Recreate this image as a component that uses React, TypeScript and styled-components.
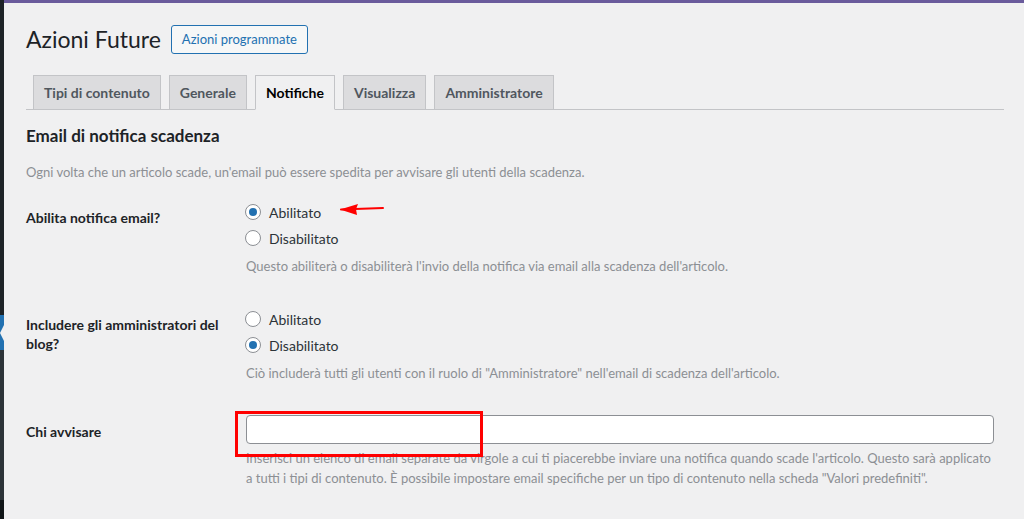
import React from "react";
import styled, { createGlobalStyle } from "styled-components";

const GlobalStyle = createGlobalStyle`
  html, body {
    margin: 0;
    padding: 0;
    background: #f0f0f1;
  }
  body {
    font-family: Lato, "Noto Sans", "Liberation Sans", sans-serif;
    color: #1d2327;
    overflow: hidden;
  }
  * {
    box-sizing: border-box;
  }
`;

const Page = styled.div`
  position: relative;
  display: flex;
  width: 1024px;
  height: 519px;
  overflow: hidden;
`;

const SideStrip = styled.div`
  width: 4px;
  flex: none;
  display: flex;
  flex-direction: column;
  background: #1d2327;
`;

const StripPart = styled.div<{ $h: number; $bg: string }>`
  height: ${(p) => p.$h}px;
  flex: none;
  background: ${(p) => p.$bg};
  position: relative;
`;

const Notch = styled.div`
  position: absolute;
  right: 0;
  top: 10px;
  width: 0;
  height: 0;
  border-top: 8px solid transparent;
  border-bottom: 8px solid transparent;
  border-right: 4px solid #f0f0f1;
`;

const Main = styled.div`
  flex: 1;
  display: flex;
  flex-direction: column;
`;

const TopBar = styled.div`
  height: 3px;
  background: #6a5b9c;
`;

const Wrap = styled.div`
  padding: 21px 20px 0 22px;
`;

const Header = styled.div`
  display: flex;
  align-items: center;
  gap: 10px;
`;

const Title = styled.h1`
  margin: 0;
  font-size: 23px;
  font-weight: 400;
  line-height: 30px;
  color: #1d2327;
`;

const ActionButton = styled.button`
  height: 29px;
  padding: 0 10px;
  border: 1px solid #2271b1;
  border-radius: 3px;
  background: #f6f7f7;
  color: #2271b1;
  font-family: inherit;
  font-size: 13px;
  line-height: 27px;
`;

const TabBar = styled.div`
  margin-top: 21px;
  display: flex;
  gap: 8px;
  padding-left: 7px;
  border-bottom: 1px solid #c3c4c7;
`;

const Tab = styled.div<{ $active?: boolean }>`
  height: 35px;
  margin-bottom: -1px;
  padding: 0 10px;
  border: 1px solid #c3c4c7;
  border-bottom-color: ${(p) => (p.$active ? "#f0f0f1" : "#c3c4c7")};
  background: ${(p) => (p.$active ? "#f0f0f1" : "#dcdcde")};
  color: ${(p) => (p.$active ? "#000" : "#50575e")};
  font-size: 14px;
  font-weight: 700;
  line-height: 34px;
  white-space: nowrap;
`;

const SectionTitle = styled.h2`
  margin: 15px 0 0;
  font-size: 17px;
  font-weight: 700;
  line-height: 22px;
  color: #1d2327;
`;

const Description = styled.p<{ $mt?: number }>`
  margin: ${(p) => p.$mt ?? 0}px 0 0;
  font-size: 13px;
  line-height: ${(p) => (p.$mt === 4 ? 20 : 18)}px;
  color: #8c8f94;
`;

const Form = styled.div`
  margin-top: 8px;
  display: flex;
  flex-direction: column;
`;

const Row = styled.div`
  display: grid;
  grid-template-columns: 210px 1fr;
  padding-bottom: 21px;
`;

const Label = styled.div`
  padding: 19px 10px 0 0;
  font-size: 14px;
  font-weight: 700;
  line-height: 19px;
  color: #1d2327;
`;

const Field = styled.div`
  padding: 10px 10px 0;
  display: flex;
  flex-direction: column;
`;

const RadioLine = styled.label`
  height: 26px;
  display: flex;
  align-items: center;
  gap: 8px;
  margin-left: -1px;
  font-size: 14px;
  color: #2c3338;
`;

const RadioDot = styled.span<{ $checked?: boolean }>`
  width: 16px;
  height: 16px;
  flex: none;
  border: 1px solid #8c8f94;
  border-radius: 50%;
  background: #fff;
  display: flex;
  align-items: center;
  justify-content: center;
  &::after {
    content: "";
    width: 8px;
    height: 8px;
    border-radius: 50%;
    background: ${(p) => (p.$checked ? "#2271b1" : "transparent")};
  }
`;

const TextInput = styled.input`
  margin-top: 2px;
  height: 29px;
  width: 100%;
  border: 1px solid #8c8f94;
  border-radius: 4px;
  background: #fff;
  font-family: inherit;
  font-size: 14px;
  padding: 0 8px;
`;

const RedBox = styled.div`
  position: absolute;
  left: 235px;
  top: 411px;
  width: 248px;
  height: 46px;
  border: 3px solid #f00;
  pointer-events: none;
`;

const ArrowMark = styled.svg`
  position: absolute;
  left: 338px;
  top: 200px;
  pointer-events: none;
`;

type RadioGroupProps = { checked: 0 | 1 };

const RadioGroup: React.FC<RadioGroupProps> = ({ checked }) => (
  <>
    <RadioLine>
      <RadioDot $checked={checked === 0} />
      Abilitato
    </RadioLine>
    <RadioLine>
      <RadioDot $checked={checked === 1} />
      Disabilitato
    </RadioLine>
  </>
);

const tabs = ["Tipi di contenuto", "Generale", "Notifiche", "Visualizza", "Amministratore"];

export default function App() {
  return (
    <>
      <GlobalStyle />
      <Page>
        <SideStrip>
          <StripPart $h={315} $bg="#1d2327" />
          <StripPart $h={35} $bg="#2271b1">
            <Notch />
          </StripPart>
          <StripPart $h={150} $bg="#2c3338" />
          <StripPart $h={19} $bg="#101517" />
        </SideStrip>
        <Main>
          <TopBar />
          <Wrap>
            <Header>
              <Title>Azioni Future</Title>
              <ActionButton>Azioni programmate</ActionButton>
            </Header>
            <TabBar>
              {tabs.map((t) => (
                <Tab key={t} $active={t === "Notifiche"}>
                  {t}
                </Tab>
              ))}
            </TabBar>
            <SectionTitle>Email di notifica scadenza</SectionTitle>
            <Description $mt={16}>
              Ogni volta che un articolo scade, un'email può essere spedita per avvisare gli utenti della scadenza.
            </Description>
            <Form>
              <Row>
                <Label>Abilita notifica email?</Label>
                <Field>
                  <RadioGroup checked={0} />
                  <Description $mt={6}>
                    Questo abiliterà o disabiliterà l'invio della notifica via email alla scadenza dell'articolo.
                  </Description>
                </Field>
              </Row>
              <Row>
                <Label>Includere gli amministratori del blog?</Label>
                <Field>
                  <RadioGroup checked={1} />
                  <Description $mt={6}>
                    Ciò includerà tutti gli utenti con il ruolo di "Amministratore" nell'email di scadenza dell'articolo.
                  </Description>
                </Field>
              </Row>
              <Row>
                <Label>Chi avvisare</Label>
                <Field>
                  <TextInput type="text" />
                  <Description $mt={4}>
                    Inserisci un elenco di email separate da virgole a cui ti piacerebbe inviare una notifica quando scade
                    l'articolo. Questo sarà applicato a tutti i tipi di contenuto. È possibile impostare email specifiche
                    per un tipo di contenuto nella scheda "Valori predefiniti".
                  </Description>
                </Field>
              </Row>
            </Form>
          </Wrap>
        </Main>
        <RedBox />
        <ArrowMark width="50" height="18" viewBox="0 0 50 18">
          <path d="M3 9.5 L45 8" stroke="#f00" strokeWidth="2" strokeLinecap="round" />
          <path d="M2 9.5 L20 4 L18 9.2 L19 15 Z" fill="#f00" />
        </ArrowMark>
      </Page>
    </>
  );
}
